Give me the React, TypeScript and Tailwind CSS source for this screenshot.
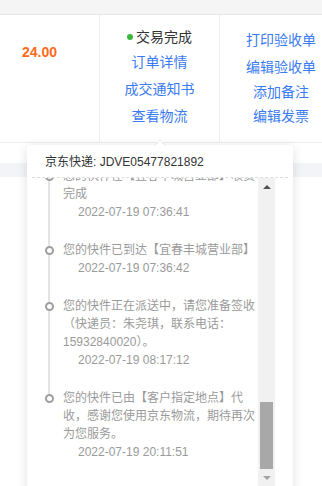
import React from 'react';

const font = { fontFamily: '"Liberation Sans", "Noto Sans CJK SC", sans-serif' };

const tracks = [
  { text: '您的快件在【宜春丰城营业部】收货完成', time: '2022-07-19 07:36:41' },
  { text: '您的快件已到达【宜春丰城营业部】', time: '2022-07-19 07:36:42' },
  { text: '您的快件正在派送中，请您准备签收（快递员：朱尧琪，联系电话：15932840020）。', time: '2022-07-19 08:17:12' },
  { text: '您的快件已由【客户指定地点】代收，感谢您使用京东物流，期待再次为您服务。', time: '2022-07-19 20:11:51' },
];

export default function App() {
  return (
    <div className="relative w-full h-[486px] overflow-hidden bg-white" style={font}>
      {/* table header strip */}
      <div className="h-[15px] bg-[#f5f5f5] border-b border-[#e6e6e6]" />

      {/* order row */}
      <div className="flex h-[128px] border-b border-[#eeeeee]">
        <div className="w-[100px] shrink-0 border-r border-[#eeeeee] pl-[22px] pt-[12px]">
          <div className="mt-[15px] text-[14px] leading-[20px] font-bold text-[#ff6a1a]">24.00</div>
        </div>
        <div className="w-[120px] shrink-0 border-r border-[#eeeeee] flex flex-col items-center pt-[12px] text-[14px] leading-[20px]">
          <div className="flex items-center text-[#333]">
            <span className="w-[6px] h-[6px] rounded-full bg-[#3cb93c] mr-[3px]" />
            交易完成
          </div>
          <div className="mt-[5px] text-[#3a7bf2]">订单详情</div>
          <div className="mt-[7px] text-[#3a7bf2]">成交通知书</div>
          <div className="mt-[7px] text-[#3a7bf2]">查看物流</div>
        </div>
        <div className="w-[122px] shrink-0 flex flex-col items-center pt-[15px] text-[14px] leading-[20px] text-[#3a7bf2]">
          <div>打印验收单</div>
          <div className="mt-[7px]">编辑验收单</div>
          <div className="mt-[5px]">添加备注</div>
          <div className="mt-[4px]">编辑发票</div>
        </div>
      </div>

      <div className="h-[20px]" />
      <div className="h-[14px] bg-[#f3f4f8]" />

      {/* logistics popover */}
      <div className="absolute left-[27px] top-[145px] w-[266px] bg-white rounded-[4px] shadow-[0_2px_12px_rgba(0,0,0,0.12)]">
        <div className="absolute left-[129px] -top-[4px] w-[8px] h-[8px] rotate-45 bg-white border-l border-t border-[#ebebeb]" />
        <div className="pl-[18px] pt-[8px] pb-[6px] text-[12px] leading-[18px] text-[#333]">
          京东快递: JDVE05477821892
        </div>
        <div className="mx-[5px] border-t border-dashed border-[#dddddd]" />

        <div className="flex h-[320px] pl-[17px] pr-[18px]">
          <div className="flex-1 overflow-hidden">
            <div className="-mt-[11px]">
              {tracks.map((t, i) => (
                <div key={i} className="flex">
                  <div className="w-[10px] shrink-0 flex flex-col items-center">
                    <div className="w-[2px] h-[5px] bg-[#e4e4e4]" />
                    <div className="w-[9px] h-[9px] shrink-0 rounded-full border-2 border-[#9e9e9e] bg-white" />
                    {i < tracks.length - 1 && <div className="w-[2px] flex-1 bg-[#e4e4e4]" />}
                  </div>
                  <div className="ml-[9px] flex-1 pb-[20px] text-[12px] leading-[18px] text-[#9a9a9a]">
                    <div>{t.text}</div>
                    <div className="pl-[15px]">{t.time}</div>
                  </div>
                </div>
              ))}
            </div>
          </div>

          {/* scrollbar */}
          <div className="w-[17px] h-[308px] shrink-0 flex flex-col bg-[#f1f1f1]">
            <div className="h-[17px] flex items-center justify-center">
              <div className="w-0 h-0 border-l-[4px] border-r-[4px] border-b-[4px] border-l-transparent border-r-transparent border-b-[#505050]" />
            </div>
            <div className="flex-1 flex flex-col justify-end">
              <div className="mx-[2px] h-[67px] bg-[#a8a8a8]" />
            </div>
            <div className="h-[17px] flex items-center justify-center">
              <div className="w-0 h-0 border-l-[4px] border-r-[4px] border-t-[4px] border-l-transparent border-r-transparent border-t-[#a3a3a3]" />
            </div>
          </div>
        </div>
      </div>
    </div>
  );
}
